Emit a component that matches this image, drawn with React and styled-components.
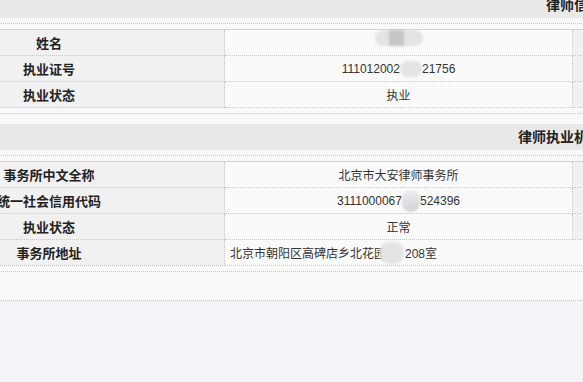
import styled, { createGlobalStyle } from 'styled-components';

const GlobalStyle = createGlobalStyle`
    html, body {
        margin: 0;
        padding: 0;
        overflow: hidden;
        background: #f4f4f8;
    }
    body {
        font-family: "Liberation Sans", "Noto Sans CJK SC", sans-serif;
        font-size: 12px;
        color: #333;
    }
`;

export default function App() {
    const lawyerRows = [
        { label: '姓名', value: <Redact $w={48} $top><Smudge /></Redact> },
        {
            label: '执业证号',
            value: <>111012002<Redact $w={22} $h={16} />21756</>
        },
        { label: '执业状态', value: '执业' },
    ];

    const firmRows = [
        { label: '事务所中文全称', value: '北京市大安律师事务所' },
        {
            label: '统一社会信用代码',
            value: <>3111000067<Redact $w={18} $h={22} $dark />524396</>
        },
        { label: '执业状态', value: '正常' },
        {
            label: '事务所地址',
            wide: true,
            value: <>北京市朝阳区高碑店乡北花园<Redact $w={24} $h={22} $pull />208室</>
        },
    ];

    return (
        <>
            <GlobalStyle />
            <Page>
                <InfoSection title="律师信息" rows={lawyerRows} />
                <InfoSection title="律师执业机构信息" rows={firmRows} />
            </Page>
        </>
    );
}

function InfoSection({ title, rows }) {
    return (
        <section>
            <Band>{title}</Band>
            <TableWrap>
                <Grid>
                    {rows.map((r, i) => (
                        <Row key={i} {...r} />
                    ))}
                </Grid>
            </TableWrap>
        </section>
    );
}

function Row({ label, value, wide }) {
    return (
        <>
            <Label>{label}</Label>
            <Value $wide={wide}>{value}</Value>
            {!wide && (
                <>
                    <Label />
                    <Value $last />
                </>
            )}
        </>
    );
}

const Page = styled.div`
    width: 1400px;
    margin: -18px 0 0 -126px;
    padding-bottom: 28px;
    background: #f9f9f9;
    border-bottom: 1px dotted #c2c2c2;
`;

const Band = styled.div`
    margin-top: 10px;
    height: 26px;
    line-height: 24px;
    background: #e9e9e9;
    text-align: center;
    font-family: "Noto Sans CJK SC", sans-serif;
    font-weight: 700;
    font-size: 14px;
    color: #222;
`;

const TableWrap = styled.div`
    margin-top: 5px;
    padding: 5px 0;
    border-top: 1px dotted #c2c2c2;
    border-bottom: 1px dotted #c2c2c2;
`;

const Grid = styled.div`
    display: grid;
    grid-template-columns: 351px 348px 351px 350px;
    border-top: 1px solid #d2d2d2;
`;

const Cell = styled.div`
    height: 25px;
    display: flex;
    align-items: center;
    border-bottom: 1px dotted #c6c6c6;
    border-right: 1px dotted #c6c6c6;
    white-space: nowrap;
`;

const Label = styled(Cell)`
    justify-content: center;
    background: #f1f1f1;
    font-family: "Noto Sans CJK SC", sans-serif;
    font-weight: 700;
    font-size: 13px;
    color: #222;
`;

const Value = styled(Cell)`
    background: #fafafa;
    justify-content: ${p => (p.$wide ? 'flex-start' : 'center')};
    padding-left: ${p => (p.$wide ? '5px' : '0')};
    grid-column: ${p => (p.$wide ? 'span 3' : 'auto')};
    border-right-color: ${p => (p.$wide || p.$last ? 'transparent' : '#c6c6c6')};
`;

const Redact = styled.span`
    display: inline-flex;
    justify-content: center;
    align-self: ${p => (p.$top ? 'flex-start' : 'center')};
    width: ${p => p.$w}px;
    height: ${p => p.$h || 16}px;
    margin-left: ${p => (p.$pull ? '-6px' : '0')};
    margin-right: ${p => (p.$pull ? '1px' : '0')};
    border-radius: 9px;
    background: ${p => (p.$dark
        ? 'linear-gradient(#ececec, #d2d2d2)'
        : '#e4e4e4')};
    filter: blur(1px);
`;

const Smudge = styled.span`
    display: block;
    width: 15px;
    height: 16px;
    margin-left: -4px;
    background: #c6c6c6;
`;
